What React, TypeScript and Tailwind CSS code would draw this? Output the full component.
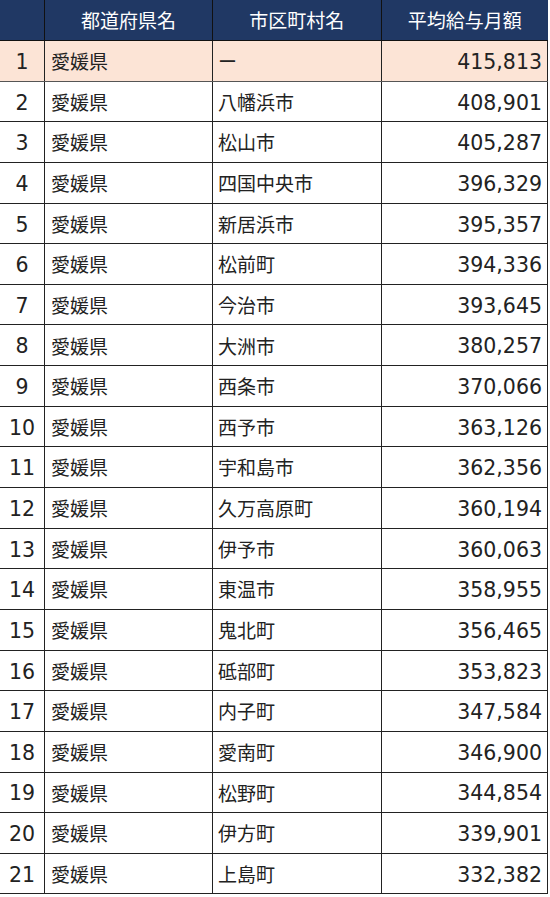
import React from "react";

const rows: [string, string, string][] = [
  ["愛媛県", "ー", "415,813"],
  ["愛媛県", "八幡浜市", "408,901"],
  ["愛媛県", "松山市", "405,287"],
  ["愛媛県", "四国中央市", "396,329"],
  ["愛媛県", "新居浜市", "395,357"],
  ["愛媛県", "松前町", "394,336"],
  ["愛媛県", "今治市", "393,645"],
  ["愛媛県", "大洲市", "380,257"],
  ["愛媛県", "西条市", "370,066"],
  ["愛媛県", "西予市", "363,126"],
  ["愛媛県", "宇和島市", "362,356"],
  ["愛媛県", "久万高原町", "360,194"],
  ["愛媛県", "伊予市", "360,063"],
  ["愛媛県", "東温市", "358,955"],
  ["愛媛県", "鬼北町", "356,465"],
  ["愛媛県", "砥部町", "353,823"],
  ["愛媛県", "内子町", "347,584"],
  ["愛媛県", "愛南町", "346,900"],
  ["愛媛県", "松野町", "344,854"],
  ["愛媛県", "伊方町", "339,901"],
  ["愛媛県", "上島町", "332,382"],
];

export default function App() {
  return (
    <div
      className="w-[550px] h-[897px] bg-white text-[#222]"
      style={{ fontFamily: '"DejaVu Sans", "Noto Sans CJK JP", sans-serif' }}
    >
      <div className="w-[548px]">
        <div className="grid grid-cols-[45px_168px_168.5px_166.5px] h-[41px] bg-[#203864] text-white text-[19px] border-b border-[#111]">
          <div className="border-r border-[#111]" />
          <div className="border-r border-[#111] flex items-center justify-center pt-[3px]">都道府県名</div>
          <div className="border-r border-[#111] flex items-center justify-center pt-[3px]">市区町村名</div>
          <div className="flex items-center justify-center pt-[3px]">平均給与月額</div>
        </div>
        {rows.map((r, i) => (
          <div
            key={i}
            className={`grid grid-cols-[45px_168px_168.5px_166.5px] h-[40.65px] border-b ${
              i === 0 ? "bg-[#fce4d6] border-[#555]" : "bg-white border-[#222]"
            }`}
          >
            <div className="border-r border-[#222] flex items-center justify-center pt-[3px] text-[20.5px]">
              {i + 1}
            </div>
            <div className="border-r border-[#222] flex items-center pl-[6px] pt-[3px] text-[19px]">{r[0]}</div>
            <div className="border-r border-[#222] flex items-center pl-[5px] pt-[3px] text-[19px]">{r[1]}</div>
            <div className="border-r border-[#222] flex items-center justify-end pr-[5px] pt-[3px] text-[20.5px]">
              {r[2]}
            </div>
          </div>
        ))}
      </div>
    </div>
  );
}
